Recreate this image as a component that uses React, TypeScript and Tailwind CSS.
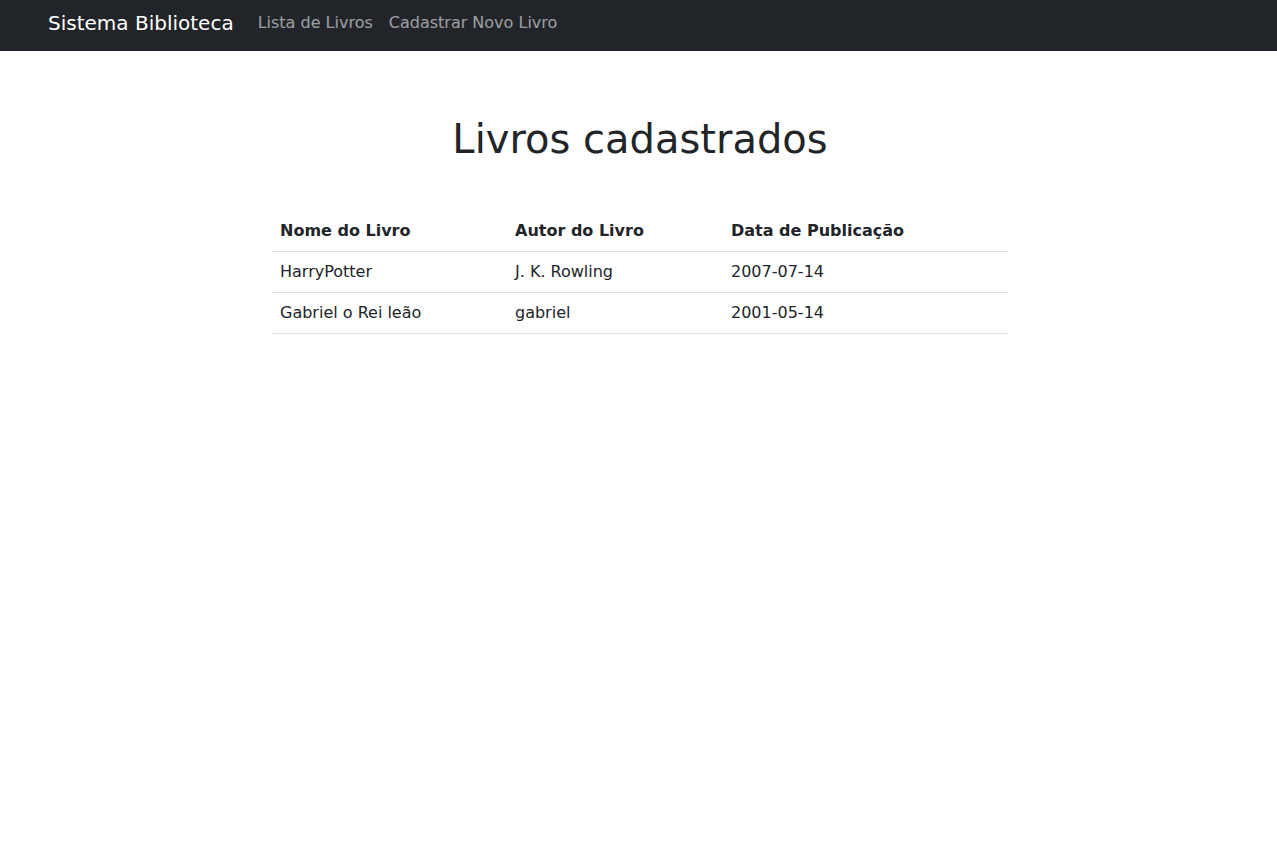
export default function App() {
  const rows = [
    { nome: "HarryPotter", autor: "J. K. Rowling", data: "2007-07-14" },
    { nome: "Gabriel o Rei leão", autor: "gabriel", data: "2001-05-14" },
  ];

  return (
    <div className="min-h-[851px] bg-white text-[#212529] font-['DejaVu_Sans',sans-serif]">
      {/* Navbar */}
      <nav className="h-[51px] bg-[#212529] px-[48px] flex items-start">
        <a className="mt-[8px] mr-[16px] text-[20px] leading-[30px] text-white">Sistema Biblioteca</a>
        <div className="mt-[11px] flex">
          <a className="px-[8px] text-[16px] leading-[24px] text-white/55">Lista de Livros</a>
          <a className="px-[8px] text-[16px] leading-[24px] text-white/55">Cadastrar Novo Livro</a>
        </div>
      </nav>

      {/* Content */}
      <main className="flex flex-col items-center pl-[3px]">
        <h1 className="mt-[64px] text-[40px] leading-[48px] font-normal">Livros cadastrados</h1>
        <table className="mt-[48px] w-[736px] text-[16px] leading-[24px] border-collapse">
          <thead>
            <tr className="border-b border-[#dee2e6]">
              <th className="w-[235px] px-[8px] py-[8px] text-left font-bold">Nome do Livro</th>
              <th className="w-[216px] px-[8px] py-[8px] text-left font-bold">Autor do Livro</th>
              <th className="px-[8px] py-[8px] text-left font-bold">Data de Publicação</th>
            </tr>
          </thead>
          <tbody>
            {rows.map((r) => (
              <tr key={r.nome} className="border-b border-[#dee2e6]">
                <td className="px-[8px] py-[8px]">{r.nome}</td>
                <td className="px-[8px] py-[8px]">{r.autor}</td>
                <td className="px-[8px] py-[8px]">{r.data}</td>
              </tr>
            ))}
          </tbody>
        </table>
      </main>
    </div>
  );
}
